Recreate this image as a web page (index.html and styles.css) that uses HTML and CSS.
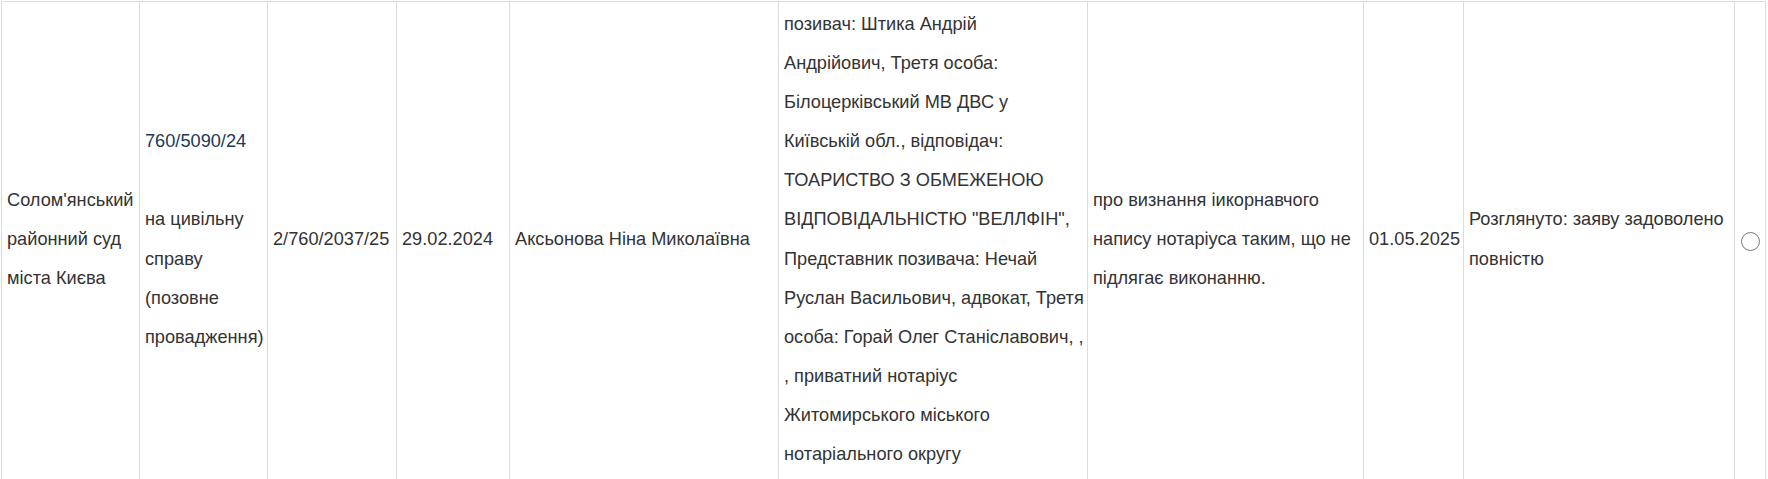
FILE: index.html
```html
<!DOCTYPE html>
<html lang="uk">
<head>
<meta charset="utf-8">
<title>Справи</title>
<link rel="stylesheet" href="styles.css">
</head>
<body>
<div class="wrap">
<table class="cases">
  <colgroup>
    <col class="c-court">
    <col class="c-num">
    <col class="c-proc">
    <col class="c-date">
    <col class="c-judge">
    <col class="c-parties">
    <col class="c-subject">
    <col class="c-date2">
    <col class="c-result">
    <col class="c-select">
  </colgroup>
  <tbody>
    <tr>
      <td>Солом'янський районний суд міста Києва</td>
      <td><a class="case-link" href="#">760/5090/24</a><br><br>на цивільну справу (позовне провадження)</td>
      <td>2/760/2037/25</td>
      <td>29.02.2024</td>
      <td>Аксьонова Ніна Миколаївна</td>
      <td>позивач: Штика Андрій<br>Андрійович, Третя особа: Білоцерківський МВ ДВС у Київській обл., відповідач: ТОАРИСТВО З ОБМЕЖЕНОЮ ВІДПОВІДАЛЬНІСТЮ "ВЕЛЛФІН", Представник позивача: Нечай Руслан Васильович, адвокат, Третя особа: Горай Олег Станіславович, , , приватний нотаріус<br>Житомирського міського нотаріального округу</td>
      <td>про визнання іикорнавчого напису нотаріуса таким, що не підлягає виконанню.</td>
      <td>01.05.2025</td>
      <td>Розглянуто: заяву задоволено повністю</td>
      <td class="select"><input class="radio" type="radio" name="case"></td>
    </tr>
  </tbody>
</table>
</div>
</body>
</html>
```

FILE: styles.css
```css
html, body {
  margin: 0;
  padding: 0;
  background: #fff;
}
.wrap {
  padding: 1px 0 0 1px;
}
.cases {
  border-collapse: collapse;
  table-layout: fixed;
  width: 1765px;
  font-family: "Liberation Sans", Arial, sans-serif;
  font-size: 18.2px;
  line-height: 39.1px;
  color: #333;
}
.cases td {
  border: 1px solid #dcdcdc;
  padding: 3px 3px 6px 5px;
  vertical-align: middle;
  text-align: left;
}
.c-court { width: 138px; }
.c-num { width: 128px; }
.c-proc { width: 129px; }
.c-date { width: 113px; }
.c-judge { width: 269px; }
.c-parties { width: 309px; }
.c-subject { width: 276px; }
.c-date2 { width: 100px; }
.c-result { width: 271px; }
.c-select { width: 31px; }
.case-link {
  color: #1c3a57;
  text-decoration: none;
}
.cases td.select {
  padding: 0;
  text-align: center;
}
.radio {
  appearance: none;
  -webkit-appearance: none;
  width: 19px;
  height: 19px;
  margin: 0;
  border: 1.5px solid #777;
  border-radius: 50%;
  background: #fff;
  vertical-align: middle;
}
```
